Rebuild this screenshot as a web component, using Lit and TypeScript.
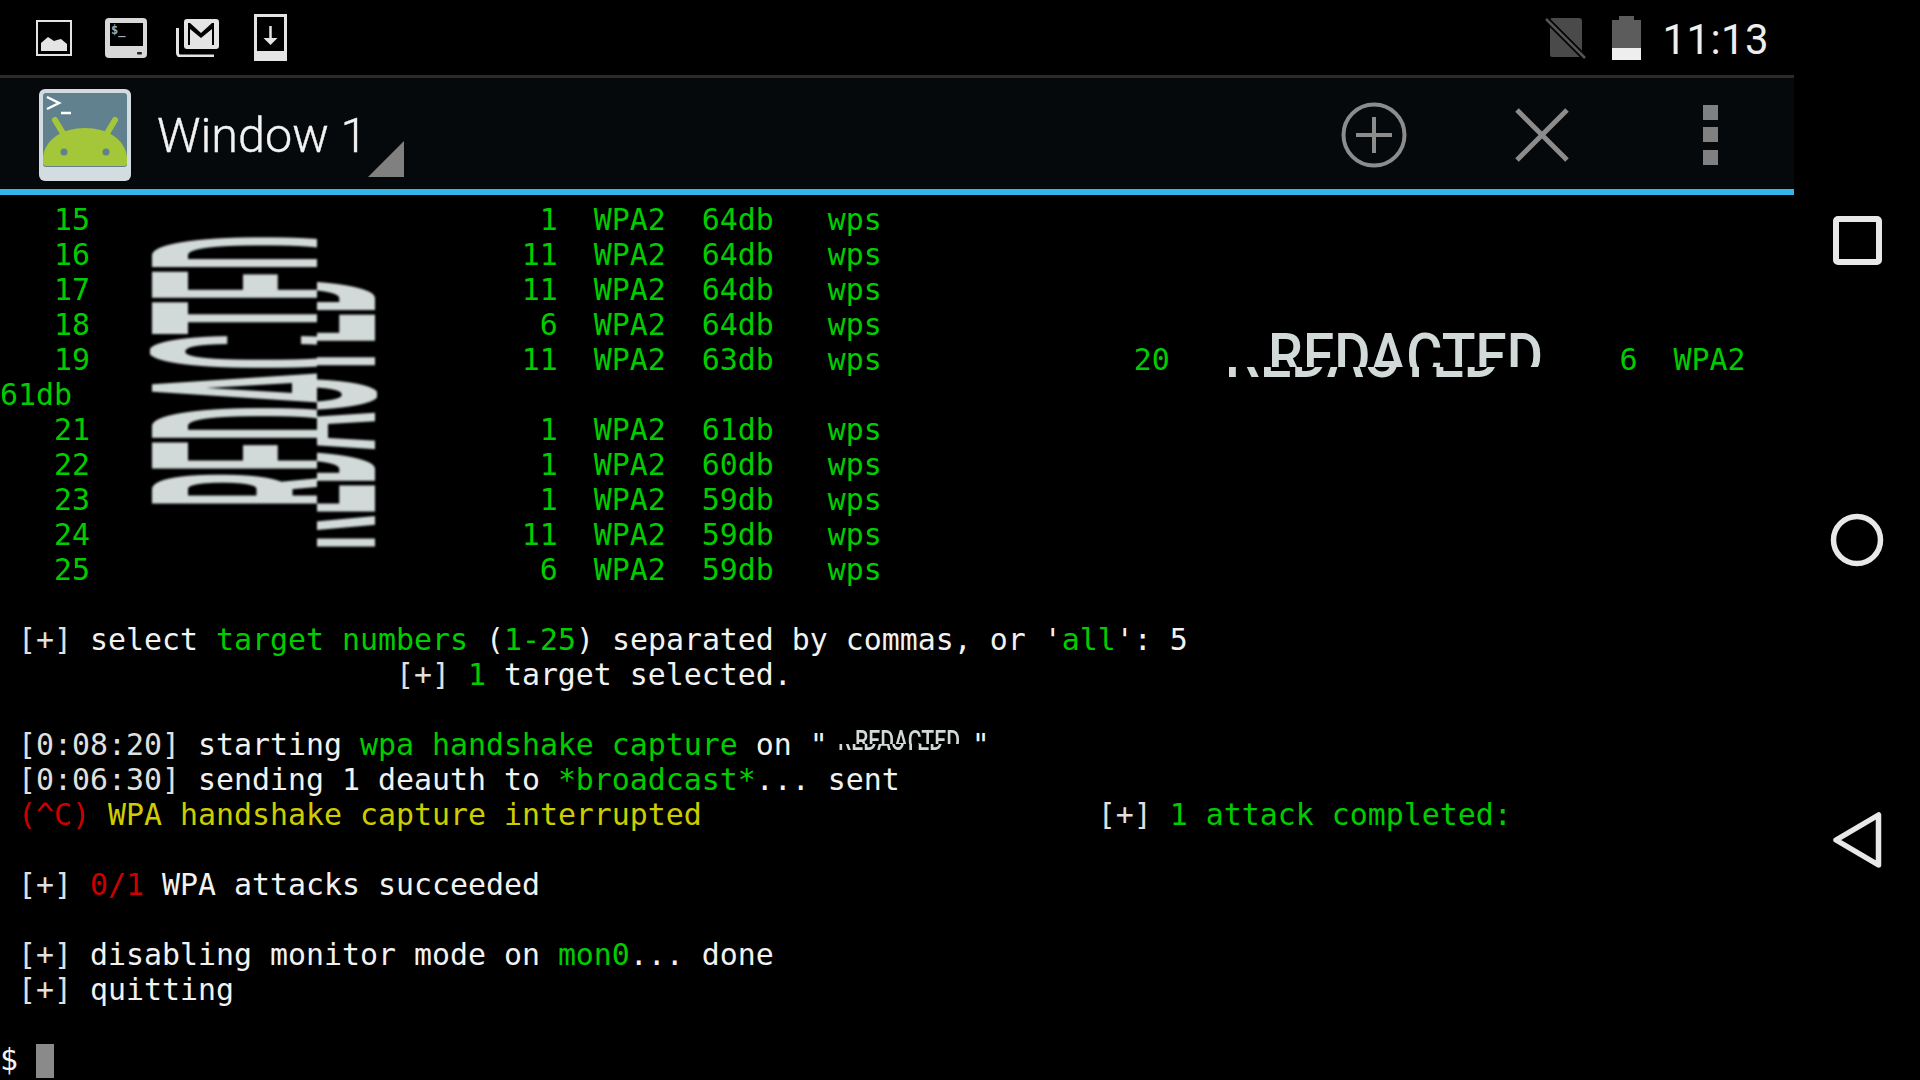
import { LitElement, html, css, svg } from "lit";
import { customElement } from "lit/decorators.js";

type Seg = [string, string];
const pad = (n: number) => " ".repeat(n);

function netRow(num: number, ch: number, db: number) {
  const c = String(ch);
  return `   ${num}${pad(30 - 5 - (c.length - 1))}${c}  WPA2  ${db}db   wps`;
}

const G = "g", W = "w", R = "r", Y = "y", D = "d";

const ROWS: Seg[][] = [
  [[G, netRow(15, 1, 64)]],
  [[G, netRow(16, 11, 64)]],
  [[G, netRow(17, 11, 64)]],
  [[G, netRow(18, 6, 64)]],
  [[G, netRow(19, 11, 63) + pad(14) + "20" + pad(25) + "6  WPA2"]],
  [[G, "61db"]],
  [[G, netRow(21, 1, 61)]],
  [[G, netRow(22, 1, 60)]],
  [[G, netRow(23, 1, 59)]],
  [[G, netRow(24, 11, 59)]],
  [[G, netRow(25, 6, 59)]],
  [],
  [[D, " [+] "], [W, "select "], [G, "target numbers"], [W, " ("], [G, "1-25"], [W, ") separated by commas, or '"], [G, "all"], [W, "': 5"]],
  [[D, pad(22) + "[+] "], [G, "1"], [W, " target selected."]],
  [],
  [[D, " [0:08:20] "], [W, "starting "], [G, "wpa handshake capture"], [W, " on \"" + pad(8) + "\""]],
  [[D, " [0:06:30] "], [W, "sending 1 deauth to "], [G, "*broadcast*"], [W, "... sent"]],
  [[R, " (^C) "], [Y, "WPA handshake capture interrupted"], [D, pad(22) + "[+] "], [G, "1 attack completed:"]],
  [],
  [[D, " [+] "], [R, "0/1"], [W, " WPA attacks succeeded"]],
  [],
  [[D, " [+] "], [W, "disabling monitor mode on "], [G, "mon0"], [W, "... done"]],
  [[D, " [+] "], [W, "quitting"]],
  [],
  [[W, "$ "]],
];

let clipId = 0;
function redacted(tf: string, w: number, h: number, split: number, shift: number, cls: string) {
  const id = `rc${clipId++}`;
  const sy = h / 71.1;
  const word = (dx: number) => svg`<text class="red ${cls}" x="0" y="0" font-size="100" textLength=${w}
    lengthAdjust="spacingAndGlyphs" transform="translate(${dx} ${h}) scale(1 ${sy})">REDACTED</text>`;
  return svg`<g transform=${tf} class=${cls === "heavy" ? "soft" : "softer"}>
    <clipPath id="${id}a"><rect x="-2" y="-2" width=${w + 4} height=${split + 2}></rect></clipPath>
    <clipPath id="${id}b"><rect x=${-shift - 2} y=${split} width=${w + 4} height=${h - split + 2}></rect></clipPath>
    <g clip-path="url(#${id}a)">${word(0)}</g>
    <g clip-path="url(#${id}b)">${word(-shift)}</g>
  </g>`;
}

@customElement("app-root")
export class AppRoot extends LitElement {
  static styles = css`
    :host { display: block; width: 1920px; height: 1080px; background: #000; position: relative; overflow: hidden; }
    .shell { display: flex; width: 1920px; height: 1080px; }
    .main { width: 1794px; display: flex; flex-direction: column; }
    .status { height: 75px; display: flex; align-items: center; padding-left: 18px; padding-right: 25px; box-sizing: border-box; }
    .slot { width: 72px; display: flex; justify-content: center; align-items: center; }
    .spacer { flex: 1; }
    .right-slot { width: 60px; display: flex; justify-content: center; }
    .time { font: 400 42px/1 Roboto, sans-serif; color: #eee; margin-left: 6px; padding-top: 5px; letter-spacing: 0.4px; }
    .divider { height: 3px; background: #2a2a2a; }
    .bar { height: 111px; background: #06090b; display: flex; align-items: center; padding-left: 39px; padding-top: 3px; box-sizing: border-box; }
    .title { font: 300 48.5px/1 Roboto, sans-serif; color: #f2f2f2; margin-left: 26px; margin-top: 3px; -webkit-text-stroke: 0.4px #f2f2f2; }
    .caret { margin-left: 1px; align-self: flex-end; margin-bottom: 12px; }
    .act { width: 168px; display: flex; justify-content: center; align-items: center; }
    .blue { height: 6px; background: #33b5e5; }
    .term { flex: 1; padding-top: 7px; font: 400 29.9px/35px "DejaVu Sans Mono", monospace; white-space: pre; position: relative; }
    .row { height: 35px; width: 1794px; }
    .g { color: #00cd00; }
    .w { color: #f2f2f2; }
    .d { color: #e0e0e0; }
    .r { color: #cd0000; }
    .y { color: #cdcd00; }
    .cursor { display: inline-block; width: 18px; height: 34px; background: #8a8a8a; vertical-align: -8px; }
    .nav { width: 126px; display: block; }
    .overlay { position: absolute; left: 0; top: 0; width: 1920px; height: 1080px; pointer-events: none; }
    .red { font-family: Roboto, sans-serif; font-weight: 500; fill: #d2dad9; }
    .red.heavy { font-weight: 700; }
    .soft { filter: blur(0.9px); }
    .softer { filter: blur(0.4px); }
    .tiny { font-family: "DejaVu Sans Mono", monospace; }
  `;

  render() {
    return html`
      <div class="shell">
        <div class="main">
          <div class="status">
            <div class="slot">
              <svg width="36" height="36" viewBox="0 0 36 36">
                <rect x="1" y="1" width="34" height="34" fill="none" stroke="#e4e4e4" stroke-width="2"></rect>
                <path d="M5 31V23l7-6 6 4 3-1 4-1 6 5v7z" fill="#e4e4e4"></path>
              </svg>
            </div>
            <div class="slot">
              <svg width="42" height="40" viewBox="0 0 42 40">
                <rect x="0" y="0" width="42" height="40" rx="4" fill="#d8d8d8"></rect>
                <rect x="5" y="5" width="33" height="23" fill="#000"></rect>
                <text class="tiny" x="6" y="16" font-size="12" font-weight="700" fill="#aaa">$_</text>
                <rect x="32" y="34" width="5" height="2.500" rx="1" fill="#222"></rect>
              </svg>
            </div>
            <div class="slot">
              <svg width="44" height="38" viewBox="0 0 44 38">
                <path d="M1.500 9V34a3 3 0 0 0 3 3H38" fill="none" stroke="#e4e4e4" stroke-width="3"></path>
                <path d="M8 3a3 3 0 0 1 3-3H40a3 3 0 0 1 3 3V27a3 3 0 0 1-3 3H11a3 3 0 0 1-3-3z" fill="#e4e4e4"></path>
                <path d="M12 26V4h2l11 10L36 4h2v22h-2V10L25 19 14 10v16z" fill="#000"></path>
              </svg>
            </div>
            <div class="slot">
              <svg width="33" height="47" viewBox="0 0 33 47">
                <rect x="0" y="0" width="33" height="47" fill="#e4e4e4"></rect>
                <rect x="3" y="3" width="27" height="34" fill="#000"></rect>
                <path d="M16.500 12V26" fill="none" stroke="#e4e4e4" stroke-width="2.500"></path>
                <path d="M9.500 24H23.500L16.500 31z" fill="#e4e4e4"></path>
              </svg>
            </div>
            <div class="spacer"></div>
            <div class="right-slot">
              <svg width="42" height="42" viewBox="0 0 42 42">
                <path d="M5 3a2 2 0 0 1 2-2H34a3 3 0 0 1 3 3V38a2 2 0 0 1-2 2H7a2 2 0 0 1-2-2z" fill="#4a4a4a"></path>
                <path d="M1 2 40 41" stroke="#000" stroke-width="6"></path>
                <path d="M1 2 40 41" stroke="#555" stroke-width="2.500"></path>
              </svg>
            </div>
            <div class="right-slot">
              <svg width="29" height="44" viewBox="0 0 29 44">
                <path d="M7 0h15v4h7v40H0V4h7z" fill="#5c5c5c"></path>
                <rect x="0" y="32" width="29" height="12" fill="#eee"></rect>
              </svg>
            </div>
            <div class="time">11:13</div>
          </div>
          <div class="divider"></div>
          <div class="bar">
            <svg width="92" height="92" viewBox="0 0 92 92">
              <rect width="92" height="92" rx="6" fill="#d3dce1"></rect>
              <rect x="4" y="4" width="84" height="74" rx="3" fill="#62818f"></rect>
              <path d="M4 74a3 3 0 0 0 3 3H85a3 3 0 0 0 3-3V68C86 50 68 39 46 39S6 50 4 68z" fill="#a4c639"></path>
              <path d="M25 46 16 31M67 46 76 31" stroke="#a4c639" stroke-width="6" stroke-linecap="round"></path>
              <circle cx="25" cy="63" r="3.500" fill="#62818f"></circle>
              <circle cx="67" cy="63" r="3.500" fill="#62818f"></circle>
              <path d="M8 8 20 14 8 20M22 24H32" fill="none" stroke="#fff" stroke-width="2.500"></path>
            </svg>
            <div class="title">Window 1</div>
            <svg class="caret" width="36" height="36" viewBox="0 0 36 36"><path d="M0 36 36 0V36z" fill="#808080"></path></svg>
            <div class="spacer"></div>
            <div class="act">
              <svg width="68" height="68" viewBox="0 0 68 68">
                <circle cx="34" cy="34" r="30.500" fill="none" stroke="#8c8c8c" stroke-width="4"></circle>
                <path d="M16 34H52M34 16V52" stroke="#8c8c8c" stroke-width="4"></path>
              </svg>
            </div>
            <div class="act">
              <svg width="56" height="56" viewBox="0 0 56 56">
                <path d="M3 3 53 53M53 3 3 53" stroke="#8c8c8c" stroke-width="5"></path>
              </svg>
            </div>
            <div class="act">
              <svg width="15" height="60" viewBox="0 0 15 60">
                <rect width="15" height="15" fill="#808080"></rect>
                <rect y="22" width="15" height="15" fill="#808080"></rect>
                <rect y="45" width="15" height="15" fill="#808080"></rect>
              </svg>
            </div>
          </div>
          <div class="blue"></div>
          <div class="term">${ROWS.map((row, i) => html`<div class="row">${row.map(([c, t]) => html`<span class=${c}>${t}</span>`)}${i === 24 ? html`<span class="cursor"></span>` : ""}</div>`)}</div>
        </div>
        <svg class="nav" width="126" height="1080" viewBox="1794 0 126 1080">
          <rect x="1836" y="219" width="43" height="43" rx="2" fill="none" stroke="#e8e8e8" stroke-width="6"></rect>
          <circle cx="1857" cy="540" r="23.500" fill="none" stroke="#e8e8e8" stroke-width="5.500"></circle>
          <path d="M1836 840 1878.500 815V865z" fill="none" stroke="#e8e8e8" stroke-width="5.500" stroke-linejoin="round"></path>
        </svg>
      </div>
      <svg class="overlay" width="1920" height="1080" viewBox="0 0 1920 1080">
        ${redacted("translate(152 507) rotate(-90)", 272, 223, 165, 43, "heavy")}
        ${redacted("translate(1268 333)", 275, 44, 34, 43, "medium")}
        ${redacted("translate(855 730)", 105, 20, 14, 17, "medium")}
      </svg>
    `;
  }
}
